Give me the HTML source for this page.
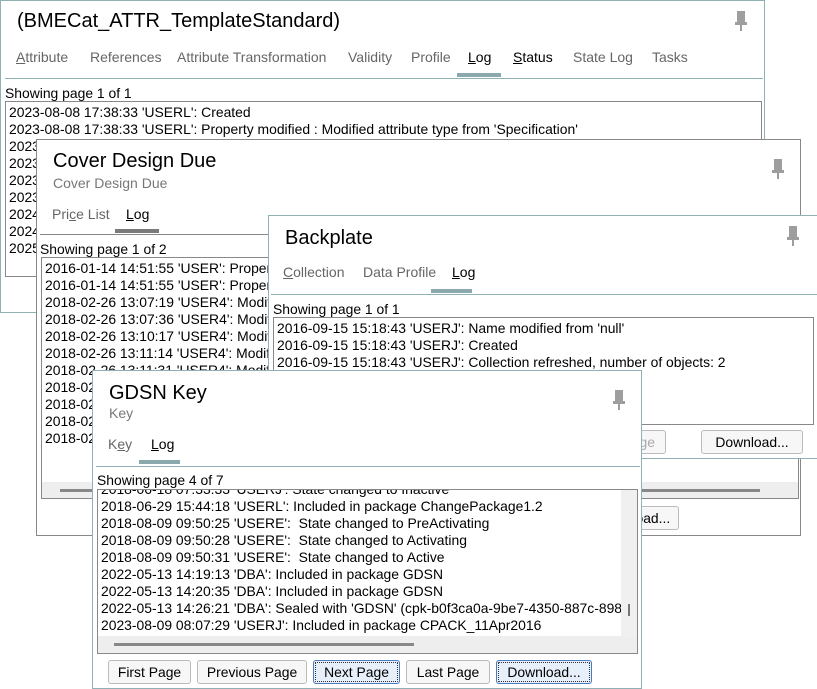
<!DOCTYPE html>
<html><head><meta charset="utf-8"><style>
body{margin:0;width:817px;height:689px;background:#fff;position:relative;overflow:hidden;font-family:"Liberation Sans","DejaVu Sans",sans-serif;color:#000}
.p{position:absolute;background:#fff;overflow:hidden;box-sizing:border-box}
.a{position:absolute;white-space:nowrap}
.t{font-size:20px}
.tab{font-size:14px;color:#666}
.tab.s{color:#000}
.line{position:absolute;height:1px;background:#8fb0b5}
.box{position:absolute;border:1px solid #888;background:#fff;box-sizing:border-box;overflow:hidden}
.log{font-size:13.9px;line-height:17px;padding:2px 0 0 3px;white-space:nowrap}
.sh{font-size:13.9px}
.btn{position:absolute;border:1px solid #bbb;border-radius:3px;background:#f7f7f7;font-size:13.9px;text-align:center;box-sizing:border-box;line-height:22px;white-space:nowrap}
.btn.f{border:1px solid #4a7cc0;background:#e6effa;outline:1px dotted #333;outline-offset:-3px}
.pin{position:absolute;width:12px;height:20px}
</style></head><body>

<svg width="0" height="0" style="position:absolute"><defs><g id="pin"><rect x="2" y="0" width="8" height="12" fill="#9e9e9e"/><rect x="0" y="11" width="12" height="3" fill="#9e9e9e"/><rect x="5" y="14" width="2" height="6" fill="#9e9e9e"/></g></defs></svg>

<!-- Panel 1 -->
<div class="p" style="left:0;top:0;width:765px;height:313px;border:1px solid #8fb0b5">
 <div class="a t" style="left:16px;top:9px">(BMECat_ATTR_TemplateStandard)</div>
 <svg class="pin" style="left:734px;top:10px"><use href="#pin"/></svg>
 <div class="a tab" style="left:15px;top:48px"><u>A</u>ttribute</div>
 <div class="a tab" style="left:89px;top:48px">References</div>
 <div class="a tab" style="left:176px;top:48px">Attribute Transformation</div>
 <div class="a tab" style="left:347px;top:48px">Validity</div>
 <div class="a tab" style="left:410px;top:48px">Profile</div>
 <div class="a tab s" style="left:467px;top:48px"><u>L</u>og</div>
 <div class="a tab s" style="left:512px;top:48px"><u>S</u>tatus</div>
 <div class="a tab" style="left:572px;top:48px">State Log</div>
 <div class="a tab" style="left:651px;top:48px">Tasks</div>
 <div class="a" style="left:456px;top:72px;width:44px;height:4px;background:#8aa9ad"></div>
 <div class="line" style="left:4px;top:77px;width:758px"></div>
 <div class="a sh" style="left:4px;top:84px">Showing page 1 of 1</div>
 <div class="box" style="left:4px;top:100px;width:757px;height:176px"><div class="log">2023-08-08 17:38:33 'USERL': Created<br>2023-08-08 17:38:33 'USERL': Property modified : Modified attribute type from 'Specification'<br>2023-08-08<br>2023-08-08<br>2023-08-08<br>2023-08-08<br>2024-01-01<br>2024-01-01<br>2025-01-01</div></div>
</div>

<!-- Panel 2 -->
<div class="p" style="left:36px;top:139px;width:765px;height:397px;border:1px solid #888">
 <div class="a t" style="left:16px;top:10px">Cover Design Due</div>
 <div class="a tab" style="left:16px;top:35px;color:#777">Cover Design Due</div>
 <svg class="pin" style="left:735px;top:19px"><use href="#pin"/></svg>
 <div class="a tab" style="left:15px;top:66px">Pri<u>c</u>e List</div>
 <div class="a tab s" style="left:89px;top:66px"><u>L</u>og</div>
 <div class="a" style="left:78px;top:89px;width:44px;height:4px;background:#7a7a7a"></div>
 <div class="line" style="left:3px;top:94px;width:760px;background:#888"></div>
 <div class="a sh" style="left:3px;top:101px">Showing page 1 of 2</div>
 <div class="box" style="left:4px;top:117px;width:758px;height:242px"><div class="log">2016-01-14 14:51:55 'USER': Property modified<br>2016-01-14 14:51:55 'USER': Property modified<br>2018-02-26 13:07:19 'USER4': Modified<br>2018-02-26 13:07:36 'USER4': Modified<br>2018-02-26 13:10:17 'USER4': Modified<br>2018-02-26 13:11:14 'USER4': Modified<br>2018-02-26 13:11:31 'USER4': Modified<br>2018-02-26<br>2018-02-26<br>2018-02-26<br>2018-02-26</div>
  <div class="a" style="left:0;top:224px;width:756px;height:16px;background:#eee"></div>
  <div class="a" style="left:18px;top:231px;width:700px;height:3px;background:#888"></div>
 </div>
 <div class="btn" style="left:582px;top:366px;width:60px;height:24px">Load...</div>
</div>

<!-- Panel 3 -->
<div class="p" style="left:268px;top:215px;width:550px;height:244px;border:1px solid #8fb0b5">
 <div class="a t" style="left:16px;top:11px">Backplate</div>
 <svg class="pin" style="left:518px;top:10px"><use href="#pin"/></svg>
 <div class="a tab" style="left:14px;top:48px"><u>C</u>ollection</div>
 <div class="a tab" style="left:94px;top:48px">Data Profile</div>
 <div class="a tab s" style="left:183px;top:48px"><u>L</u>og</div>
 <div class="a" style="left:162px;top:73px;width:41px;height:4px;background:#8aa9ad"></div>
 <div class="line" style="left:2px;top:78px;width:546px"></div>
 <div class="a sh" style="left:4px;top:85px">Showing page 1 of 1</div>
 <div class="box" style="left:4px;top:101px;width:541px;height:108px"><div class="log">2016-09-15 15:18:43 'USERJ': Name modified from 'null'<br>2016-09-15 15:18:43 'USERJ': Created<br>2016-09-15 15:18:43 'USERJ': Collection refreshed, number of objects: 2</div></div>
 <div class="btn" style="left:250px;top:214px;width:147px;height:24px;color:#aaa;text-align:right;padding-right:10px">Last Page</div>
 <div class="btn" style="left:432px;top:214px;width:102px;height:24px">Download...</div>
</div>

<!-- Panel 4 -->
<div class="p" style="left:92px;top:370px;width:550px;height:319px;border:1px solid #8fb0b5">
 <div class="a t" style="left:16px;top:11px">GDSN Key</div>
 <div class="a tab" style="left:16px;top:34px;color:#777">Key</div>
 <svg class="pin" style="left:520px;top:19px"><use href="#pin"/></svg>
 <div class="a tab" style="left:15px;top:65px">K<u>e</u>y</div>
 <div class="a tab s" style="left:58px;top:65px"><u>L</u>og</div>
 <div class="a" style="left:46px;top:89px;width:41px;height:4px;background:#8aa9ad"></div>
 <div class="line" style="left:3px;top:95px;width:544px"></div>
 <div class="a sh" style="left:4px;top:101px">Showing page 4 of 7</div>
 <div class="box" style="left:4px;top:118px;width:541px;height:165px">
  <div class="log" style="margin-top:-11px">2018-06-18 07:33:33 'USERJ': State changed to Inactive<br>2018-06-29 15:44:18 'USERL': Included in package ChangePackage1.2<br>2018-08-09 09:50:25 'USERE':&nbsp; State changed to PreActivating<br>2018-08-09 09:50:28 'USERE':&nbsp; State changed to Activating<br>2018-08-09 09:50:31 'USERE':&nbsp; State changed to Active<br>2022-05-13 14:19:13 'DBA': Included in package GDSN<br>2022-05-13 14:20:35 'DBA': Included in package GDSN<br>2022-05-13 14:26:21 'DBA': Sealed with 'GDSN' (cpk-b0f3ca0a-9be7-4350-887c-898<br>2023-08-09 08:07:29 'USERJ': Included in package CPACK_11Apr2016</div>
  <div class="a" style="left:0;top:146px;width:539px;height:17px;background:#eee"></div>
  <div class="a" style="left:523px;top:0;width:16px;height:148px;background:#f0f0f0"></div>
  <div class="a" style="left:530px;top:114px;width:2px;height:12px;background:#777"></div>
  <div class="a" style="left:16px;top:153px;width:300px;height:3px;background:#888"></div>
 </div>
 <div class="btn" style="left:15px;top:289px;width:83px;height:24px">First Page</div>
 <div class="btn" style="left:104px;top:289px;width:110px;height:24px">Previous Page</div>
 <div class="btn f" style="left:220px;top:289px;width:87px;height:24px">Next Page</div>
 <div class="btn" style="left:313px;top:289px;width:84px;height:24px">Last Page</div>
 <div class="btn f" style="left:403px;top:289px;width:96px;height:24px">Download...</div>
</div>

</body></html>
